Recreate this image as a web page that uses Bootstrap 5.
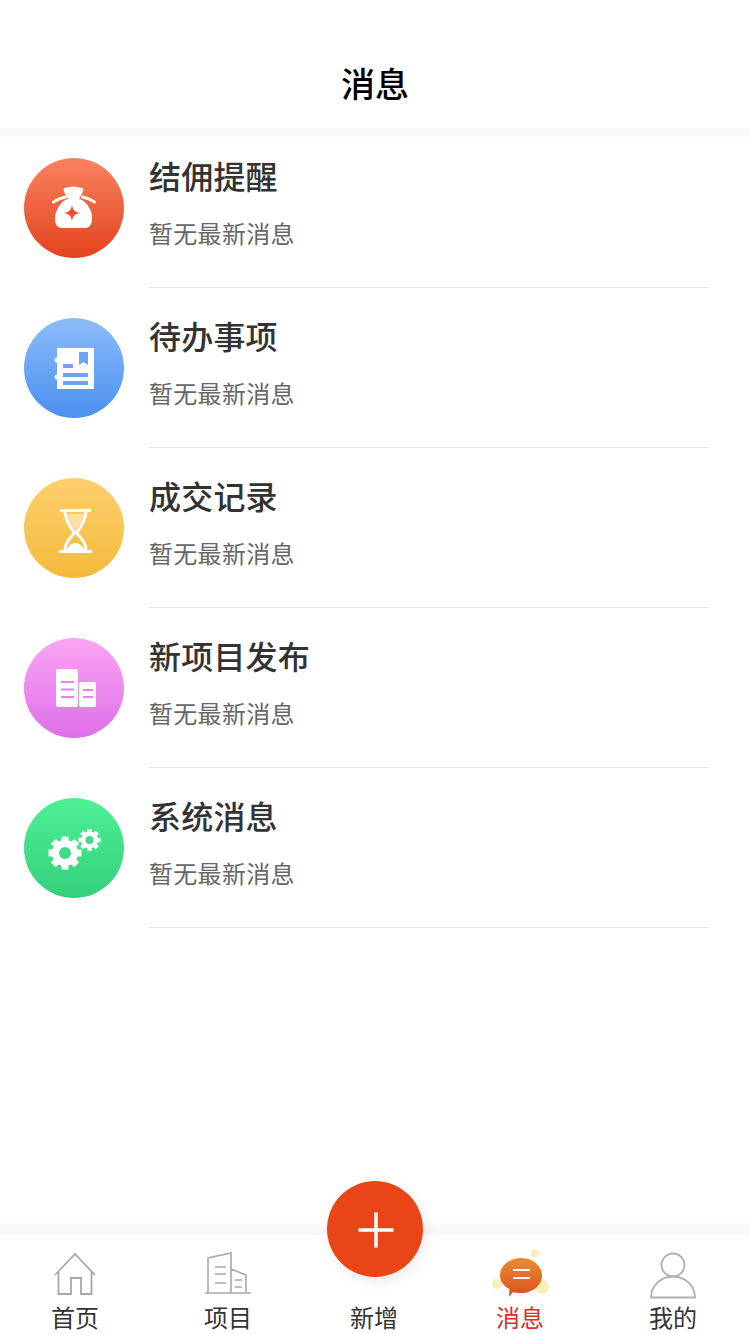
<!DOCTYPE html>
<html lang="zh-CN">
<head>
    <meta charset="UTF-8">
    <meta name="viewport" content="width=device-width, initial-scale=1.0">
    <title>消息</title>
    <link rel="stylesheet" href="https://cdn.jsdelivr.net/npm/bootstrap@5.3.0/dist/css/bootstrap.min.css">
    <script defer src="https://cdn.jsdelivr.net/npm/bootstrap@5.3.0/dist/js/bootstrap.bundle.min.js"></script>
    <style>
        body {
            background: #fff;
            font-family: "Noto Sans CJK SC", "Liberation Sans", sans-serif;
        }
        .app-page {
            width: 750px;
            height: 1334px;
            overflow: hidden;
            position: relative;
        }
        .top-title {
            height: 128px;
            padding-top: 59px;
            font-size: 34px;
            line-height: 48px;
            font-weight: 500;
            color: #000;
        }
        .top-shade {
            height: 16px;
            background: linear-gradient(#f7f7f7, #fdfdfd 80%, #fff);
            margin-bottom: -16px;
        }
        .msg-row {
            height: 160px;
            padding-left: 24px;
        }
        .msg-circle {
            width: 100px;
            height: 100px;
            margin-top: 30px;
            flex: none;
        }
        .msg-body {
            margin-left: 25px;
            width: 559px;
            border-bottom: 1px solid #e8e8e8;
        }
        .msg-title {
            font-size: 32px;
            line-height: 46px;
            margin-top: 24px;
            font-weight: 500;
            letter-spacing: .2px;
            color: #333;
        }
        .msg-sub {
            font-size: 24px;
            line-height: 36px;
            margin-top: 17px;
            letter-spacing: .3px;
            color: #666;
        }
        .c-red { background: linear-gradient(#fa8260, #e2431d); }
        .c-blue { background: linear-gradient(#8cbcfb, #4a90ee); }
        .c-yellow { background: linear-gradient(#fdd06e, #f4ba3c); }
        .c-pink { background: linear-gradient(#fba6f3, #dd6ee8); }
        .c-green { background: linear-gradient(#4df094, #35cf7c); }
        .bottom-area {
            position: absolute;
            left: 0;
            right: 0;
            bottom: 0;
        }
        .bottom-shade {
            height: 15px;
            background: linear-gradient(#fdfdfd, #f7f7f7);
        }
        .bottom-tabs {
            height: 99px;
            background: #fff;
        }
        .tab-cell {
            height: 99px;
            font-size: 24px;
            line-height: 30px;
            color: #333;
        }
        .tab-wide { width: 156px; }
        .tab-side { width: 150px; }
        .tab-mid { width: 136px; }
        .tab-cell svg {
            display: block;
            margin-top: 15px;
        }
        .tab-active { color: #e02b2b; }
        .tab-gap { height: 67px; }
        .fab-add {
            position: absolute;
            left: 327px;
            top: -39px;
            width: 96px;
            height: 96px;
            background: #ea4419;
            box-shadow: 3px 5px 14px rgba(0, 0, 0, 0.08);
        }
    </style>
</head>
<body>
<div class="app-page">
    <div class="top-title text-center">消息</div>
    <div class="top-shade"></div>

    <div class="msg-row d-flex">
        <div class="msg-circle rounded-circle c-red d-flex align-items-center justify-content-center">
            <svg width="100" height="100" viewBox="0 0 100 100">
                <path d="M40 30c3 0 6-1.500 9.500-1.500S56 30 59 30c1 3-1 6-3 9l-1 2c5 1 9 6 11.500 11 1.500 3 1.500 6 1.500 9 0 6-3 9-7 9H38c-4 0-7-3-7-9 0-3 .5-6 2-9 2.500-5 6-10 11-11l-1-2c-2-3-4-6-3-9z" fill="#fff"/>
                <path d="M29.500 44c3-2 7-4 12-5M70.500 44c-3-2-7-4-12-5" stroke="#fff" stroke-width="3" stroke-linecap="round" fill="none"/>
                <path d="M48 47c1 5 2.500 7 8 8-5.500 1-7 3-8 8-1-5-2.500-7-8-8 5.500-1 7-3 8-8z" fill="#e9532c"/>
            </svg>
        </div>
        <div class="msg-body">
            <div class="msg-title">结佣提醒</div>
            <div class="msg-sub">暂无最新消息</div>
        </div>
    </div>

    <div class="msg-row d-flex">
        <div class="msg-circle rounded-circle c-blue d-flex align-items-center justify-content-center">
            <svg width="100" height="100" viewBox="0 0 100 100">
                <rect x="33" y="30" width="37" height="41" fill="#fff"/>
                <circle cx="33" cy="42" r="2.500" fill="#fff"/>
                <circle cx="33" cy="59" r="2.500" fill="#fff"/>
                <path d="M55 34h9v13l-4.500-3-4.500 3z" fill="#6ea3f3"/>
                <rect x="39" y="46" width="10" height="4" fill="#7c9cf0"/>
                <rect x="39" y="55" width="25" height="4" fill="#6ea3f3"/>
                <rect x="39" y="63" width="25" height="4" fill="#6ea3f3"/>
            </svg>
        </div>
        <div class="msg-body">
            <div class="msg-title">待办事项</div>
            <div class="msg-sub">暂无最新消息</div>
        </div>
    </div>

    <div class="msg-row d-flex">
        <div class="msg-circle rounded-circle c-yellow d-flex align-items-center justify-content-center">
            <svg width="100" height="100" viewBox="0 0 100 100">
                <path d="M36 32.500h31M35 73.500h33" stroke="#fff" stroke-width="3" fill="none"/>
                <path d="M41 33c0 9 5 16 9.500 22-4.500 5-9.500 9-9.500 18M62 33c0 9-5 16-9.500 22 4.500 5 9.500 9 9.500 18" stroke="#fff" stroke-width="3" fill="none"/>
                <path d="M43 36h17c-1 6-4.500 12-8.500 17-4-5-7.500-11-8.500-17z" fill="#fff" opacity=".45"/>
                <path d="M43 72c1-4 5-7 8.500-7s7.500 3 8.500 7z" fill="#fff"/>
            </svg>
        </div>
        <div class="msg-body">
            <div class="msg-title">成交记录</div>
            <div class="msg-sub">暂无最新消息</div>
        </div>
    </div>

    <div class="msg-row d-flex">
        <div class="msg-circle rounded-circle c-pink d-flex align-items-center justify-content-center">
            <svg width="100" height="100" viewBox="0 0 100 100">
                <rect x="32" y="31" width="22" height="38" rx="2" fill="#fff"/>
                <rect x="55" y="44" width="17" height="25" rx="2" fill="#fff"/>
                <path d="M37 44h13M37 51.500h13M37 59h13M59 52h10M59 59h10" stroke="#e683ec" stroke-width="2"/>
            </svg>
        </div>
        <div class="msg-body">
            <div class="msg-title">新项目发布</div>
            <div class="msg-sub">暂无最新消息</div>
        </div>
    </div>

    <div class="msg-row d-flex">
        <div class="msg-circle rounded-circle c-green d-flex align-items-center justify-content-center">
            <svg width="100" height="100" viewBox="0 0 100 100">
                <circle cx="41" cy="55" r="13" fill="#fff"/>
                <g stroke="#fff" stroke-width="7">
                    <path d="M41 38.500v33M24.500 55h33M29.300 43.300l23.400 23.400M52.700 43.300L29.300 66.700"/>
                </g>
                <circle cx="41" cy="55" r="6" fill="#3fdc88"/>
                <circle cx="65.500" cy="42" r="8.500" fill="#fff"/>
                <g stroke="#fff" stroke-width="4.500">
                    <path d="M65.500 31v22M54.500 42h22M57.700 34.200l15.600 15.600M73.300 34.200L57.700 49.800"/>
                </g>
                <circle cx="65.500" cy="42" r="4" fill="#3fdc88"/>
            </svg>
        </div>
        <div class="msg-body">
            <div class="msg-title">系统消息</div>
            <div class="msg-sub">暂无最新消息</div>
        </div>
    </div>

    <div class="bottom-area">
        <div class="bottom-shade"></div>
        <div class="bottom-tabs d-flex">
            <div class="tab-cell tab-side d-flex flex-column align-items-center">
                <svg width="44" height="52" viewBox="0 0 44 52">
                    <path d="M2 25L22 4l20 21M5.500 21v23H18V28h10v16h10.500V21" fill="none" stroke="#a8a8a8" stroke-width="1.800"/>
                </svg>
                首页
            </div>
            <div class="tab-cell tab-wide d-flex flex-column align-items-center">
                <svg width="46" height="52" viewBox="0 0 46 52">
                    <path d="M0 43h46M3 43V8l23-5v40M26 19l15 6v18M10 17h11M10 24h11M10 33h11M30 30h7M30 37h7" fill="none" stroke="#a8a8a8" stroke-width="1.600"/>
                </svg>
                项目
            </div>
            <div class="tab-cell tab-mid d-flex flex-column align-items-center">
                <div class="tab-gap"></div>
                新增
            </div>
            <div class="tab-cell tab-wide tab-active d-flex flex-column align-items-center">
                <svg width="60" height="52" viewBox="0 0 60 52">
                    <defs>
                        <linearGradient id="bubbleFill" x1="0" y1="0" x2="0" y2="1">
                            <stop offset="0" stop-color="#ea8c33"/>
                            <stop offset="1" stop-color="#d9501f"/>
                        </linearGradient>
                    </defs>
                    <circle cx="52" cy="37" r="7" fill="#f8efb8"/>
                    <circle cx="7" cy="34" r="5" fill="#f8efb8"/>
                    <circle cx="45" cy="3" r="4" fill="#f8efb8"/>
                    <path d="M31 8c12 0 21 8 21 17.500S43 43 31 43c-3 0-6-.3-8-1l-4 5 .5-8C13.500 36 10 31 10 25.500 10 16 19 8 31 8z" fill="url(#bubbleFill)"/>
                    <path d="M23 20h17M23 28h17" stroke="#fff" stroke-width="2"/>
                </svg>
                消息
            </div>
            <div class="tab-cell tab-side d-flex flex-column align-items-center">
                <svg width="46" height="52" viewBox="0 0 46 52">
                    <circle cx="23" cy="15" r="11.500" fill="none" stroke="#b0b0b0" stroke-width="1.800"/>
                    <path d="M1 47.500c0-11 9-21 22-21s22 10 22 21z" fill="none" stroke="#b0b0b0" stroke-width="1.800"/>
                </svg>
                我的
            </div>
        </div>
        <div class="fab-add rounded-circle d-flex align-items-center justify-content-center">
            <svg width="40" height="40" viewBox="0 0 40 40">
                <path d="M21 3.500v35M3.500 21h35" stroke="#fff" stroke-width="3.500"/>
            </svg>
        </div>
    </div>
</div>
</body>
</html>
